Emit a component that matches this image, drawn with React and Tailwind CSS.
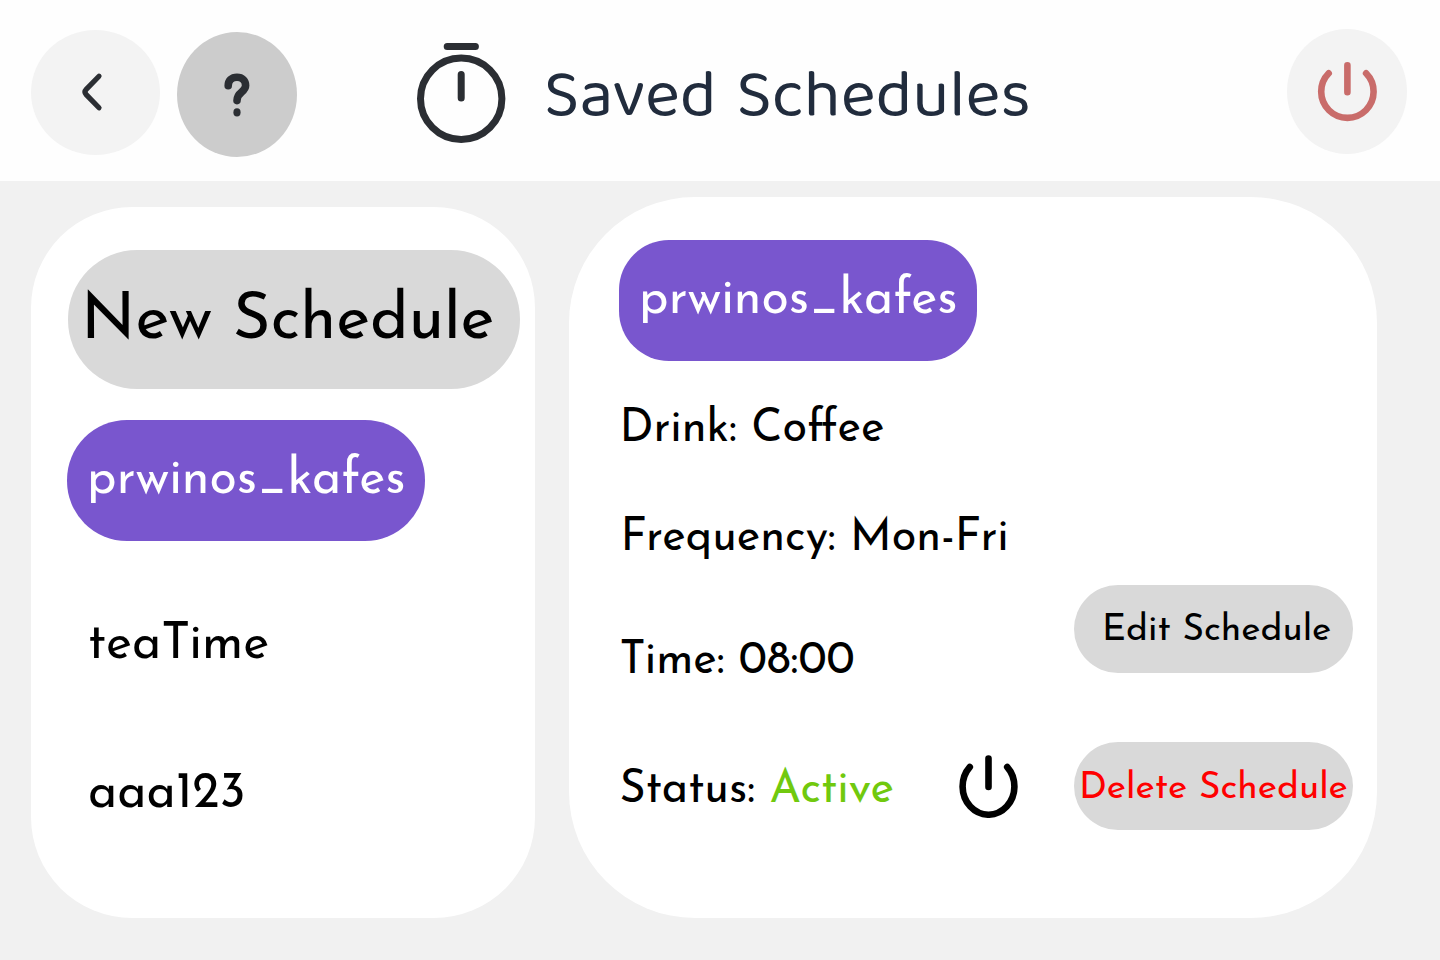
function BackIcon() {
  return (
    <svg className="h-[40px] w-[24px]" viewBox="0 0 24 40" fill="none" stroke="#2b2e33" strokeWidth="5.2" strokeLinecap="round" strokeLinejoin="round">
      <path d="M19 4.2L6.2 17.4C4.6 19.1 4.6 20.9 6.2 22.6L19 35.8" />
    </svg>
  );
}

function HelpIcon() {
  return (
    <svg className="h-[44px] w-[26px]" viewBox="0 0 26 44" fill="none">
      <path d="M4.2 12.8C4.2 7.6 7.6 4.3 13 4.3C18.4 4.3 21.6 7.8 21.6 12.6C21.6 19.6 13 18.6 13 27.6" stroke="#2b2e33" strokeWidth="7.6" strokeLinecap="round" strokeLinejoin="round" />
      <ellipse cx="13" cy="39.4" rx="3.6" ry="4.1" fill="#2b2e33" />
    </svg>
  );
}

function TimerIcon() {
  return (
    <svg className="h-[100px] w-[89px]" viewBox="0 0 89 100" fill="none" stroke="#2b2e33" strokeWidth="7" strokeLinecap="round">
      <circle cx="44.2" cy="55.8" r="40.7" />
      <path d="M30.2 3.5H58.4M44.2 31.4V55" />
    </svg>
  );
}

function PowerIcon() {
  return (
    <svg className="h-[60px] w-[60px]" viewBox="0 0 60 60" fill="none" stroke="#c96c6a" strokeWidth="6.6" strokeLinecap="round">
      <path d="M11.7 11.3A26.2 26.2 0 1 0 49.1 11.3M30.4 3.4V30.2" />
    </svg>
  );
}

function ToggleIcon() {
  return (
    <svg className="h-[63px] w-[59px]" viewBox="0 0 59 63" fill="none" stroke="#000" strokeWidth="6.6" strokeLinecap="round">
      <path d="M10.8 12A25.9 28.2 0 1 0 48.2 12M29.5 3.6V32" />
    </svg>
  );
}

export default function App() {
  return (
    <div className="flex h-[960px] w-[1440px] flex-col overflow-hidden bg-[#f1f1f1] font-['Josefin_Sans','Lato',sans-serif] text-black">
      <header className="flex h-[181px] shrink-0 items-start bg-[#fefefe] pl-[31px]">
        <button className="mt-[30px] flex h-[125px] w-[129px] items-center justify-center rounded-[50%] bg-[#f3f3f3] pr-[8px] pb-[2px]">
          <BackIcon />
        </button>
        <button className="mt-[32px] ml-[17px] flex h-[125px] w-[120px] items-center justify-center rounded-[50%] bg-[#cccccc] pt-[1px]">
          <HelpIcon />
        </button>
        <div className="mt-[43px] ml-[120px]">
          <TimerIcon />
        </div>
        <h1 className="mt-[62px] ml-[38px] w-[500px] text-[67px] leading-[80px] whitespace-nowrap text-[#212c3d] font-['Baloo_Tamma_2','Nunito','Lato',sans-serif]">
          Saved Schedules
        </h1>
        <button className="mt-[29px] ml-[243px] flex h-[125px] w-[120px] items-center justify-center rounded-[50%] bg-[#f3f3f3]">
          <PowerIcon />
        </button>
      </header>

      <main className="flex items-start pl-[31px]">
        <nav className="mt-[26px] flex h-[711px] w-[504px] flex-col items-start rounded-[101px] bg-white pt-[43px] pl-[36px]">
          <button className="ml-px h-[139px] w-[452px] rounded-[69px] bg-[#d9d9d9] pl-[13px] text-left text-[65px] leading-[143px] whitespace-nowrap">
            New Schedule
          </button>
          <button className="mt-[31px] h-[121px] w-[358px] rounded-[60px] bg-[#7956ce] pl-[20px] text-left text-[50px] leading-[121px] text-white">
            prwinos_kafes
          </button>
          <button className="mt-[75px] ml-[21px] text-[50px] leading-[60px]">teaTime</button>
          <button className="mt-[89px] ml-[21px] text-[50px] leading-[60px]">aaa123</button>
        </nav>

        <section className="mt-[16px] ml-[34px] flex h-[721px] w-[808px] flex-col items-start rounded-[126px] bg-white pt-[43px] pl-[50px]">
          <h2 className="h-[121px] w-[358px] rounded-[50px] bg-[#7956ce] pl-[20px] text-[50px] leading-[121px] text-white">
            prwinos_kafes
          </h2>
          <p className="mt-[39px] ml-[0.5px] text-[45px] leading-[60px]">Drink: Coffee</p>
          <p className="mt-[49px] ml-[1.5px] text-[45px] leading-[60px]">Frequency: Mon-Fri</p>
          <div className="mt-[16px] flex h-[106px] items-start">
            <p className="mt-[47px] w-[455px] pl-[0.5px] text-[45px] leading-[60px]">Time: 08:00</p>
            <button className="h-[88px] w-[279px] rounded-[44px] bg-[#d9d9d9] pl-[28px] text-left text-[37px] leading-[92px] whitespace-nowrap">
              Edit Schedule
            </button>
          </div>
          <div className="mt-[51px] flex h-[88px] items-start">
            <p className="mt-[19px] w-[340px] pl-[0.5px] text-[45px] leading-[60px] whitespace-nowrap">
              Status: <span className="text-[#71c90e]">Active</span>
            </p>
            <button className="mt-[13px] w-[115px]">
              <ToggleIcon />
            </button>
            <button className="h-[88px] w-[279px] rounded-[44px] bg-[#d9d9d9] pl-[5px] text-left text-[37px] leading-[94px] whitespace-nowrap text-[#ff0000]">
              Delete Schedule
            </button>
          </div>
        </section>
      </main>
    </div>
  );
}
